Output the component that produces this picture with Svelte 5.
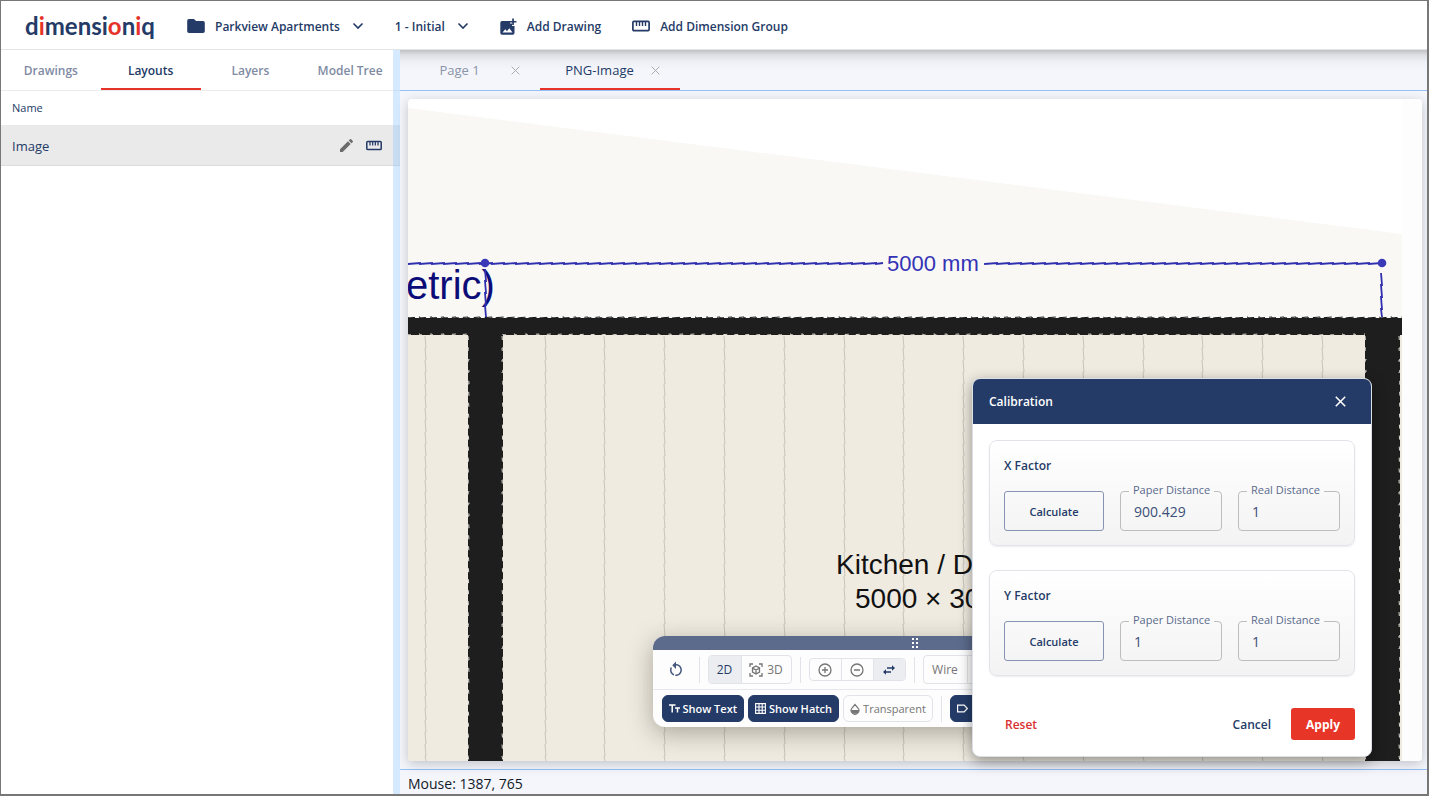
<script lang="ts">
const sideTabs = ['Drawings', 'Layouts', 'Layers', 'Model Tree'];
const pageTabs = ['Page 1', 'PNG-Image'];

let activeSide = $state('Layouts');
let activePage = $state('PNG-Image');
let mode = $state('2D');
let factors = $state([
  { axis: 'X', paper: '900.429', real: '1' },
  { axis: 'Y', paper: '1', real: '1' },
]);

// floor board joints
const boards = Array.from({ length: 17 }, (_, i) => 17 + i * 60 - Math.round(i / 5));

// scanned lines drift by a pixel, then snap back
function sawH(x1: number, x2: number, y: number): string {
  let d = `M${x1} ${y}`;
  for (let x = x1; x < x2; x += 12) {
    const end = Math.min(x + 12, x2);
    d += `L${x} ${y + 1}L${end} ${y}`;
  }
  return d;
}

function sawV(x: number, y1: number, y2: number): string {
  let d = `M${x} ${y1}`;
  for (let y = y1; y < y2; y += 12) {
    const end = Math.min(y + 12, y2);
    d += `L${x} ${y}L${x + 1} ${end}`;
  }
  return d;
}
</script>

{#snippet chevron()}
  <svg class="chevron" width="12" height="12" viewBox="0 0 12 12"><path d="M1.5 3.5 6 8l4.5-4.5" /></svg>
{/snippet}

{#snippet cross(size: number)}
  <svg class="cross" width={size} height={size} viewBox="0 0 10 10"><path d="M.7.7 9.3 9.3M9.3.7.7 9.3" /></svg>
{/snippet}

{#snippet ruler(w: number, h: number)}
  <svg width={w} height={h} viewBox="0 0 18 12" fill="none" stroke="currentColor">
    <rect x=".9" y="1.4" width="16.2" height="9.2" rx="1" stroke-width="1.7" />
    <path d="M4.5 2v4M7.5 2v4M10.5 2v4M13.5 2v4" stroke-width="1.4" />
  </svg>
{/snippet}

<div class="app">
  <header class="topbar">
    <a class="logo" href="/">d<b>i</b>mensi<b>o</b>n<b>i</b>q</a>
    <button class="nav">
      <svg width="18" height="14" viewBox="0 0 18 14" fill="currentColor"><path d="M2 0h5l2 2h7a1.8 1.8 0 0 1 1.8 1.8v8.4A1.8 1.8 0 0 1 16 14H2a1.8 1.8 0 0 1-1.8-1.8V1.8A1.8 1.8 0 0 1 2 0z" /></svg>
      <span>Parkview Apartments</span>
      {@render chevron()}
    </button>
    <button class="nav"><span>1 - Initial</span>{@render chevron()}</button>
    <button class="nav">
      <svg width="17" height="17" viewBox="0 0 17 17" fill="currentColor">
        <path d="M2 3h8v2.5h2V8h2.5v7a1.7 1.7 0 0 1-1.7 1.7H2A1.7 1.7 0 0 1 .3 15V4.7A1.7 1.7 0 0 1 2 3zM2.5 14.5h10L9.3 10.2 7 13.2 5.3 11.2z" fill-rule="evenodd" />
        <path d="M12.2.5h1.7v2.4h2.5v1.7h-2.5V7h-1.7V4.6H9.8V2.9h2.4z" />
      </svg>
      <span>Add Drawing</span>
    </button>
    <button class="nav">{@render ruler(18, 12)}<span>Add Dimension Group</span></button>
  </header>

  <div class="workspace">
    <aside class="sidebar">
      <nav class="side-tabs">
        {#each sideTabs as tab}
          <button class:active={activeSide === tab} onclick={() => (activeSide = tab)}>{tab}</button>
        {/each}
      </nav>
      <div class="list-head">Name</div>
      <div class="list-row">
        <span>Image</span>
        <button class="pencil" aria-label="Edit">
          <svg width="13" height="13" viewBox="3 3 18 18" fill="currentColor"><path d="M3 17.25V21h3.75L17.81 9.94l-3.75-3.75L3 17.25zM20.71 7.04a1 1 0 0 0 0-1.41l-2.34-2.34a1 1 0 0 0-1.41 0l-1.83 1.83 3.75 3.75 1.83-1.83z" /></svg>
        </button>
        <button aria-label="Measure">{@render ruler(16, 11)}</button>
      </div>
      <div class="splitter"></div>
    </aside>

    <main class="main">
      <nav class="page-tabs">
        {#each pageTabs as tab}
          <div class="page-tab" class:active={activePage === tab}>
            <button class="page-name" onclick={() => (activePage = tab)}>{tab}</button>
            <button class="page-close" aria-label="Close tab">{@render cross(9)}</button>
          </div>
        {/each}
      </nav>

      <div class="stage">
        <div class="canvas">
          <svg class="plan" width="100%" height="100%">
            <rect x="994" width="100%" height="100%" fill="#fdfdfd" />
            <path d="M0 9 994 135V236H0z" fill="#f9f8f5" />
            <rect y="228" width="994" height="440" fill="#efebe1" />
            {#each boards as x}
              <path d={sawV(x, 237, 662)} stroke="#c9c5bb" fill="none" />
            {/each}
            <g fill="#1e1e1e">
              <rect y="219" width="994" height="17" />
              <rect x="60" y="230" width="35" height="432" />
              <rect x="957" y="230" width="35" height="432" />
            </g>
            <g stroke="#111" fill="none" stroke-dasharray="8 4">
              <path d={sawH(0, 994, 218)} />
            </g>
            <g stroke="#e4e0d6" fill="none" stroke-dasharray="4 8">
              <path d={sawH(0, 60, 235)} />
              <path d={sawH(95, 957, 235)} />
              <path d={sawV(60, 237, 662)} />
              <path d={sawV(94, 237, 662)} />
              <path d={sawV(957, 237, 662)} />
              <path d={sawV(991, 237, 662)} />
            </g>
            <text x="-2" y="200" class="title">etric)</text>
            <g stroke="#2f2fb0" stroke-width="1.8" fill="none">
              <path d={sawH(0, 475, 164)} />
              <path d={sawH(577, 974, 164)} />
              <path d={sawV(77, 170, 218)} />
              <path d={sawV(973, 174, 218)} />
            </g>
            <circle cx="77" cy="164" r="4.3" fill="#3a3ab8" />
            <circle cx="974" cy="164" r="4.3" fill="#3a3ab8" />
            <text x="479" y="172" class="dim">5000 mm</text>
            <text x="428" y="475" class="room">Kitchen / D</text>
            <text x="447" y="509" class="room">5000 × 30</text>
          </svg>
        </div>

        <section class="tools" aria-label="View tools">
          <div class="grip">
            <svg width="6" height="10" viewBox="0 0 6 10" fill="#fff"><path d="M0 0h2v2H0zM4 0h2v2H4zM0 4h2v2H0zM4 4h2v2H4zM0 8h2v2H0zM4 8h2v2H4z" /></svg>
          </div>
          <div class="tool-row">
            <button class="reset-view" aria-label="Reset view">
              <svg width="18" height="18" viewBox="0 0 24 24" fill="currentColor"><path d="M12 4c2.1 0 4.1.8 5.6 2.3 3.1 3.1 3.1 8.2 0 11.3-1.8 1.9-4.3 2.6-6.7 2.3l.5-2c1.7.2 3.5-.4 4.8-1.7 2.3-2.3 2.3-6.1 0-8.5C15.1 6.6 13.5 6 12 6v4.600l-5-5 5-5V4M6.3 17.6C3.7 15 3.3 11 5.1 7.9l1.5 1.5c-1.1 2.2-.7 5 1.2 6.8.5.5 1.1.9 1.8 1.2l-.6 2c-1-.4-1.9-1-2.7-1.8z" /></svg>
            </button>
            <i class="rule"></i>
            <div class="seg modes">
              <button class:on={mode === '2D'} onclick={() => (mode = '2D')}>2D</button>
              <button class:on={mode === '3D'} onclick={() => (mode = '3D')}>
                <svg width="14" height="14" viewBox="0 0 14 14" fill="none" stroke="currentColor" stroke-width="1.3"><path d="M1 4V1h3M10 1h3v3M13 10v3h-3M4 13H1v-3M7 3l3.5 2v4L7 11 3.5 9V5zM3.5 5 7 7l3.5-2M7 7v4" /></svg>
                3D
              </button>
            </div>
            <i class="rule"></i>
            <div class="seg zooms">
              <button aria-label="Zoom in"><svg width="14" height="14" viewBox="0 0 14 14" fill="none" stroke="currentColor" stroke-width="1.3"><circle cx="7" cy="7" r="6" /><path d="M7 4v6M4 7h6" /></svg></button>
              <button aria-label="Zoom out"><svg width="14" height="14" viewBox="0 0 14 14" fill="none" stroke="currentColor" stroke-width="1.3"><circle cx="7" cy="7" r="6" /><path d="M4 7h6" /></svg></button>
              <button class="on" aria-label="Fit width"><svg width="12" height="10" viewBox="0 0 12 10"><path d="M4 2.3h5V.2L12 3 9 5.8V3.7H4zM8 6.3H3V4.2L0 7l3 2.8V7.7h5z" fill="currentColor" /></svg></button>
            </div>
            <i class="rule"></i>
            <div class="seg wires"><button>Wire</button><button aria-label="Solid"></button></div>
          </div>
          <div class="tool-row toggles">
            <button class="toggle solid">
              <svg width="11" height="9" viewBox="0 0 11 9" fill="none" stroke="currentColor" stroke-width="1.5"><path d="M0 1h6.5M3.2 1v7.5M6 4h5M8.5 4v4.5" /></svg>
              Show Text
            </button>
            <button class="toggle solid">
              <svg width="11" height="11" viewBox="0 0 11 11" fill="none" stroke="currentColor" stroke-width="1.1"><path d="M.6.6h9.8v9.8H.6zM4 .6v9.8M7.2.6v9.8M.6 4h9.8M.6 7.2h9.8" /></svg>
              Show Hatch
            </button>
            <button class="toggle">
              <svg width="10" height="12" viewBox="0 0 10 12"><path d="M5 1.5 2.2 4.8a3.8 3.8 0 1 0 5.6 0z" fill="none" stroke="currentColor" stroke-width="1.2" /><path d="M1.2 7h7.6a3.8 3.8 0 0 1-7.6 0z" fill="currentColor" /></svg>
              Transparent
            </button>
            <i class="rule"></i>
            <button class="toggle solid tag" aria-label="Labels">
              <svg width="11" height="9" viewBox="0 0 11 9" fill="none" stroke="currentColor" stroke-width="1.2"><path d="M.6 1.2v6.6h6.6L10.3 4.5 7.2 1.2z" /></svg>
            </button>
          </div>
        </section>

        <section class="dialog" role="dialog" aria-label="Calibration">
          <header>
            <h2>Calibration</h2>
            <button aria-label="Close">{@render cross(11)}</button>
          </header>
          <div class="cards">
            {#each factors as f}
              <div class="card">
                <h3>{f.axis} Factor</h3>
                <div class="fields">
                  <button class="calculate">Calculate</button>
                  <fieldset>
                    <legend><label for="paper-{f.axis}">Paper Distance</label></legend>
                    <input id="paper-{f.axis}" bind:value={f.paper} />
                  </fieldset>
                  <fieldset>
                    <legend><label for="real-{f.axis}">Real Distance</label></legend>
                    <input id="real-{f.axis}" bind:value={f.real} />
                  </fieldset>
                </div>
              </div>
            {/each}
          </div>
          <footer>
            <button class="reset">Reset</button>
            <button>Cancel</button>
            <button class="apply">Apply</button>
          </footer>
        </section>
      </div>

      <div class="status">Mouse: 1387, 765</div>
    </main>
  </div>
</div>

<style>
  :global(body) {
    margin: 0;
  }

  .app {
    display: flex;
    flex-direction: column;
    height: 100vh;
    box-sizing: border-box;
    overflow: hidden;
    border: solid #777;
    border-width: 1px 2px 2px 1px;
    background: #fff;
    color: #243b67;
    font-family: "Open Sans", "Noto Sans", sans-serif;
    font-size: 13px;
  }

  .app * {
    box-sizing: border-box;
  }

  button {
    display: flex;
    align-items: center;
    justify-content: center;
    margin: 0;
    padding: 0;
    border: 0;
    background: none;
    color: inherit;
    font: inherit;
    white-space: nowrap;
    cursor: pointer;
  }

  svg {
    flex: none;
  }

  .chevron,
  .cross {
    fill: none;
    stroke: currentColor;
    stroke-width: 1.6;
  }

  .cross {
    stroke-width: 1;
  }

  .topbar {
    display: flex;
    align-items: center;
    flex: none;
    height: 49px;
    padding: 2px 0 0 24px;
    border-bottom: 1px solid #e4e4e6;
    background: #fff;
  }

  .logo {
    flex: none;
    width: 131px;
    color: #243b67;
    font-family: Lato, sans-serif;
    font-size: 24px;
    font-weight: 700;
    line-height: 28px;
    text-decoration: none;
    white-space: nowrap;
  }

  .logo b {
    color: #e6332a;
    font-weight: inherit;
  }

  .nav {
    gap: 10px;
    height: 32px;
    margin-left: 31px;
    font-size: 12px;
    font-weight: 600;
  }

  .nav .chevron {
    margin-left: 2px;
  }

  .workspace {
    display: flex;
    flex: 1;
    min-height: 0;
  }

  .sidebar {
    position: relative;
    flex: none;
    width: 399px;
    background: #fff;
  }

  .side-tabs {
    display: flex;
    height: 41px;
    border-bottom: 1px solid #ececee;
  }

  .side-tabs button {
    flex: 1;
    padding-top: 2px;
    border-bottom: 2px solid transparent;
    color: #7f8ba3;
    font-size: 12px;
    font-weight: 600;
  }

  .side-tabs .active {
    border-color: #e6332a;
    color: #243b67;
  }

  .list-head {
    padding: 0 11px;
    font-size: 11px;
    line-height: 34px;
  }

  .list-row {
    display: flex;
    align-items: center;
    gap: 13px;
    height: 41px;
    padding: 0 18px 0 11px;
    border-bottom: 1px solid #dcdcde;
    background: #eaeaea;
  }

  .list-row span {
    flex: 1;
    padding-top: 2px;
  }

  .pencil {
    color: #6b6b6b;
  }

  .splitter {
    position: absolute;
    inset: 0 0 0 auto;
    width: 7px;
    background: rgba(144, 196, 255, 0.38);
    cursor: col-resize;
  }

  .main {
    display: flex;
    flex: 1;
    flex-direction: column;
    min-width: 0;
    background: #f4f6fb;
  }

  .page-tabs {
    display: flex;
    flex: none;
    height: 41px;
    border-bottom: 1px solid #96c0fa;
    background: linear-gradient(#bfc1c5, #dddfe4 5px, #eef0f5 12px, #f4f6fb 20px);
  }

  .page-tab {
    display: flex;
    width: 140px;
    padding: 2px 20px 0 8px;
    border-bottom: 2px solid transparent;
    color: #8a93a8;
    font-size: 13px;
  }

  .page-tab.active {
    border-color: #e6332a;
    color: #243b67;
  }

  .page-name {
    flex: 1;
  }

  .page-close {
    color: #a2a5ac;
  }

  .stage {
    position: relative;
    flex: 1;
    min-height: 0;
    padding: 8px 5px 8px 8px;
  }

  .canvas {
    height: 100%;
    overflow: hidden;
    border-radius: 4px;
    background: #fff;
    box-shadow: 0 3px 12px rgba(30, 35, 50, 0.24);
  }

  .plan {
    display: block;
  }

  .plan text {
    font-family: "Liberation Sans", sans-serif;
  }

  .title {
    fill: #0c0c78;
    font-size: 40px;
  }

  .dim {
    fill: #3333b5;
    font-size: 22px;
  }

  .room {
    fill: #111;
    font-size: 28px;
  }

  .tools {
    position: absolute;
    bottom: 42px;
    left: 50%;
    width: 524px;
    margin-left: -261px;
    overflow: hidden;
    border-radius: 12px;
    background: #fdfdfd;
    box-shadow: 0 6px 24px rgba(40, 35, 20, 0.35);
    color: #757575;
    font-size: 12px;
  }

  .grip {
    display: flex;
    align-items: center;
    justify-content: center;
    height: 14px;
    background: #5c6b8c;
  }

  .tool-row {
    display: flex;
    align-items: center;
    gap: 8px;
    height: 40px;
    padding: 0 9px;
    border-bottom: 1px solid #e6e7ec;
  }

  .toggles {
    gap: 4px;
    height: 37px;
    border: 0;
  }

  .reset-view {
    width: 29px;
    height: 28px;
    color: #45577d;
  }

  .rule {
    width: 1px;
    height: 26px;
    background: #e2e3e8;
  }

  .seg {
    display: flex;
    overflow: hidden;
    height: 29px;
    border: 1px solid #e2e3e8;
    border-radius: 4px;
  }

  .seg button + button {
    border-left: 1px solid #e2e3e8;
  }

  .seg .on {
    background: #ebedf1;
    color: #243b67;
  }

  .modes button {
    gap: 4px;
    width: 32px;
    font-weight: 500;
  }

  .modes button + button {
    width: 50px;
  }

  .zooms {
    width: 97px;
    height: 23px;
  }

  .zooms button {
    flex: 1;
  }

  .wires button {
    width: 43px;
    font-weight: 500;
  }

  .toggle {
    gap: 3px;
    height: 27px;
    padding: 0 6px;
    border: 1px solid #e2e3e8;
    border-radius: 6px;
    font-size: 11px;
    font-weight: 500;
  }

  .toggle.solid {
    border-color: #243b67;
    background: #243b67;
    color: #fff;
    font-weight: 600;
  }

  .toggles .rule {
    margin: 0 4px;
  }

  .tag {
    width: 80px;
    justify-content: flex-start;
  }

  .dialog {
    position: absolute;
    right: 55px;
    bottom: 12px;
    width: 400px;
    overflow: hidden;
    border: 1px solid #dcdfe6;
    border-radius: 8px;
    background: #fff;
    box-shadow: 0 4px 14px rgba(0, 0, 0, 0.4);
  }

  .dialog header {
    display: flex;
    align-items: center;
    justify-content: space-between;
    height: 45px;
    padding: 0 25px 0 16px;
    background: #243b67;
    color: #fff;
  }

  h2,
  h3 {
    margin: 0;
    font-size: 12px;
    font-weight: 600;
    line-height: 18px;
  }

  .dialog header .cross {
    stroke-width: 1.4;
  }

  .cards {
    display: flex;
    flex-direction: column;
    gap: 24px;
    padding: 16px;
  }

  .card {
    padding: 16px 14px 14px;
    border: 1px solid #e3e4ea;
    border-radius: 8px;
    background: linear-gradient(#fff, #f3f3f3);
    box-shadow: 0 1px 2px rgba(0, 0, 0, 0.08);
  }

  .fields {
    display: flex;
    align-items: flex-end;
    gap: 16px;
    margin-top: 9px;
  }

  .calculate {
    flex: none;
    width: 100px;
    height: 40px;
    border: 1px solid #8693b3;
    border-radius: 3px;
    font-size: 11px;
    font-weight: 600;
  }

  fieldset {
    flex: 1;
    min-width: 0;
    height: 47px;
    margin: 0;
    padding: 0 0 0 8px;
    border: 1px solid #bdbdbd;
    border-radius: 4px;
  }

  legend {
    height: 14px;
    padding: 0 4px;
    color: #5a6a8c;
    font-size: 11px;
    line-height: 12px;
    white-space: nowrap;
  }

  input {
    width: 100%;
    height: 26px;
    padding: 0 5px;
    border: 0;
    outline: 0;
    background: none;
    color: #3b4f78;
    font: inherit;
    font-size: 14px;
  }

  .dialog footer {
    display: flex;
    align-items: center;
    gap: 4px;
    padding: 16px;
    font-weight: 600;
  }

  .dialog footer button {
    height: 32px;
    padding: 0 16px;
    border-radius: 3px;
    font-size: 12px;
  }

  .dialog footer .reset {
    margin-right: auto;
    color: #d93030;
  }

  .dialog footer .apply {
    width: 64px;
    padding: 0;
    background: #e73528;
    color: #fff;
    font-weight: 700;
  }

  .status {
    flex: none;
    height: 25px;
    padding-left: 8px;
    border-top: 1px solid #96c0fa;
    color: #111827;
    font-size: 14px;
    line-height: 28px;
  }
</style>
